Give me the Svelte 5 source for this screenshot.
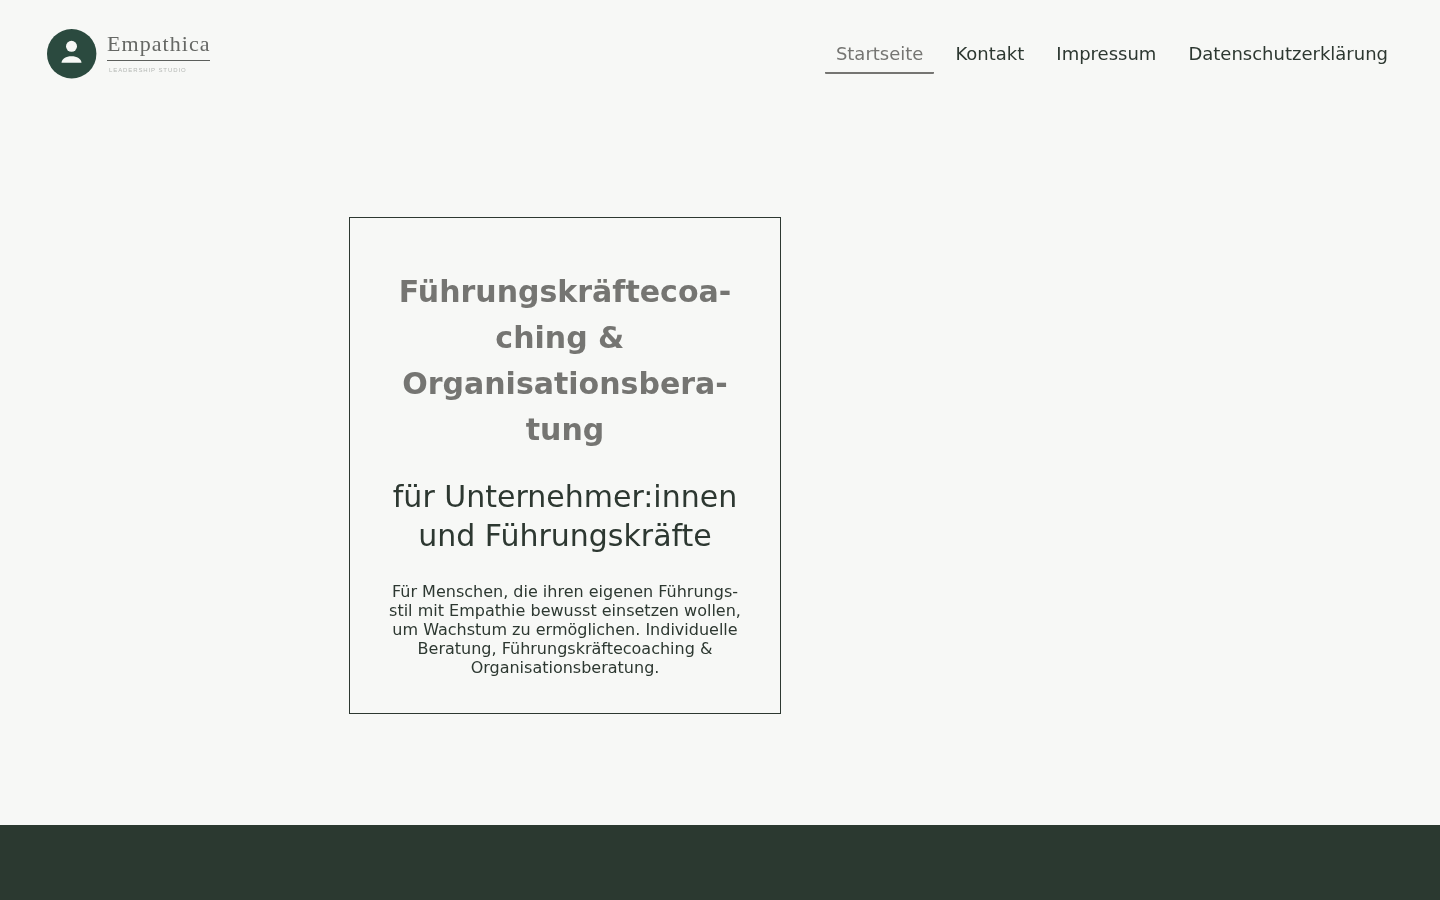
<script>
  const links = [
    { label: 'Startseite', active: true },
    { label: 'Kontakt' },
    { label: 'Impressum' },
    { label: 'Datenschutzerklärung' }
  ];
</script>

<div class="page">
  <header class="header">
    <a class="logo" href="#top">
      <svg class="mark" viewBox="0 0 50 50" width="50" height="50" aria-hidden="true">
        <circle cx="24.700" cy="24.800" r="24.700" fill="#2b4a3f" />
        <circle cx="24.500" cy="17.300" r="5.500" fill="#f7f8f6" />
        <path d="M14.500 33.800c.3-4 4.500-6.500 10-6.500s9.700 2.500 10 6.500z" fill="#f7f8f6" />
      </svg>
      <span class="wordmark">
        <span class="name">Empathica</span>
        <span class="tag">LEADERSHIP STUDIO</span>
      </span>
    </a>
    <nav class="nav">
      {#each links as link}
        <a class="link" class:active={link.active} href="#top">{link.label}</a>
      {/each}
    </nav>
  </header>

  <main class="main">
    <section class="card">
      <h1>Führungskräftecoa&shy;ching &amp;&nbsp; Organisationsbera&shy;tung</h1>
      <h2>für Unternehmer:innen und Führungskräfte</h2>
      <p>Für Menschen, die ihren eigenen Führungs&shy;stil mit Empathie bewusst einsetzen wollen, um Wachstum zu ermöglichen. Individuelle Beratung, Führungskräftecoaching &amp; Organisationsberatung.</p>
    </section>
  </main>

  <footer class="footer"></footer>
</div>

<style>
  :global(body) {
    margin: 0;
    background: #f7f8f6;
  }
  .page {
    height: 900px;
    overflow: hidden;
    display: flex;
    flex-direction: column;
    font-family: "DejaVu Sans", sans-serif;
    color: #2d3831;
    will-change: transform;
  }
  .header {
    height: 108px;
    box-sizing: border-box;
    padding: 29px 41px 0 47px;
    display: flex;
    justify-content: space-between;
    align-items: flex-start;
  }
  .logo {
    display: flex;
    gap: 10px;
    text-decoration: none;
  }
  .mark {
    display: block;
  }
  .wordmark {
    display: flex;
    flex-direction: column;
    width: 103px;
  }
  .name {
    font-family: "Liberation Serif", serif;
    font-size: 22px;
    line-height: 26px;
    height: 32px;
    box-sizing: border-box;
    letter-spacing: 1.050px;
    color: #666865;
    border-bottom: 1.500px solid #5c5f5c;
    white-space: nowrap;
    padding-top: 2px;
  }
  .tag {
    font-family: "Liberation Sans", sans-serif;
    font-size: 6px;
    line-height: 8px;
    margin: 5px 0 0 2px;
    letter-spacing: 0.9px;
    color: #b5b8b5;
    white-space: nowrap;
  }
  .nav {
    display: flex;
    padding-top: 11px;
  }
  .link {
    font-size: 18px;
    line-height: 28px;
    padding: 0 11px 4px;
    margin-left: 10px;
    color: #2d3831;
    text-decoration: none;
    border-bottom: 2px solid transparent;
    border-radius: 1px;
  }
  .link.active {
    color: #757572;
    border-bottom-color: #757572;
  }
  .main {
    height: 717px;
    box-sizing: border-box;
    padding: 109px 0 0 349px;
  }
  .card {
    width: 432px;
    height: 497px;
    box-sizing: border-box;
    border: 1px solid #2d3831;
    padding: 51px 38px 0;
    text-align: center;
  }
  h1 {
    margin: 0;
    font-size: 30px;
    line-height: 46px;
    font-weight: 700;
    color: #757572;
  }
  h2 {
    margin: 24px 0 0;
    font-size: 30px;
    line-height: 39px;
    font-weight: 400;
    color: #2d3831;
  }
  p {
    margin: 27px 0 0;
    font-size: 16px;
    line-height: 19px;
    color: #2d3831;
  }
  .footer {
    flex: 1;
    background: #2b3930;
  }
</style>
